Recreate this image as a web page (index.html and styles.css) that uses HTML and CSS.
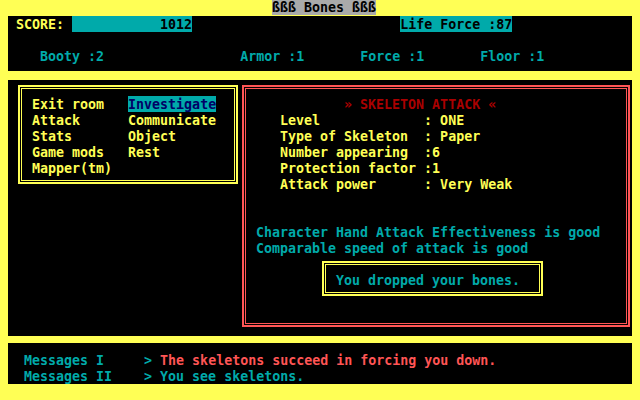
FILE: index.html
```html
<!DOCTYPE html>
<html>
<head>
<meta charset="utf-8">
<link rel="stylesheet" href="styles.css">
</head>
<body>
<div class="screen">
  <div class="titlebar"><span class="title">ßßß Bones ßßß</span></div>

  <div class="panel top">
    <div class="line yellow"> SCORE: <span class="bar">           1012</span>                          <span class="bar">Life Force :87</span></div>
    <div class="line"> </div>
    <div class="line cyan">    Booty :2                 Armor :1       Force :1       Floor :1</div>
  </div>

  <div class="panel middle">
    <div class="box menu">
      <div class="line">Exit room   <span class="sel">Investigate</span></div>
      <div class="line">Attack      Communicate</div>
      <div class="line">Stats       Object</div>
      <div class="line">Game mods   Rest</div>
      <div class="line">Mapper(tm)</div>
    </div>
    <div class="box attack">
      <div class="line darkred">           » SKELETON ATTACK «</div>
      <div class="line yellow">   Level             : ONE</div>
      <div class="line yellow">   Type of Skeleton  : Paper</div>
      <div class="line yellow">   Number appearing  :6</div>
      <div class="line yellow">   Protection factor :1</div>
      <div class="line yellow">   Attack power      : Very Weak</div>
      <div class="line"> </div>
      <div class="line"> </div>
      <div class="line cyan">Character Hand Attack Effectiveness is good</div>
      <div class="line cyan">Comparable speed of attack is good</div>
      <div class="box notice">
        <div class="line cyan">You dropped your bones.</div>
      </div>
    </div>
  </div>

  <div class="panel messages">
    <div class="line cyan">Messages I     &gt; <span class="lightred">The skeletons succeed in forcing you down.</span></div>
    <div class="line cyan">Messages II    &gt; You see skeletons.</div>
  </div>
</div>
</body>
</html>
```

FILE: styles.css
```css
html, body {
  margin: 0;
  padding: 0;
  background: #ffff55;
}

.screen {
  width: 640px;
  height: 400px;
  background: #ffff55;
  font-family: "DejaVu Sans Mono", "Liberation Mono", monospace;
  font-size: 13.3px;
  font-weight: bold;
  overflow: hidden;
}

.line {
  height: 16px;
  line-height: 17px;
  white-space: pre;
}

.titlebar {
  height: 16px;
  line-height: 16px;
  padding-left: 272px;
  white-space: pre;
}

.title {
  display: inline-block;
  width: 104px;
  height: 15px;
  line-height: 15px;
  background: #aaaaaa;
  color: #000000;
  vertical-align: top;
}

.panel {
  margin: 0 8px;
  background: #000000;
  box-sizing: border-box;
}

.top {
  height: 55px;
}

.bar {
  display: inline-block;
  height: 16px;
  vertical-align: top;
  background: #00aaaa;
  color: #000000;
}

.yellow { color: #ffff55; }
.cyan { color: #00aaaa; }
.darkred { color: #aa0000; }
.lightred { color: #ff5555; }

.middle {
  margin-top: 9px;
  height: 256px;
  display: flex;
  align-items: flex-start;
  padding: 5px 0 0 10px;
}

.box {
  box-sizing: border-box;
  border: 2px solid #ffff55;
  box-shadow: inset 0 0 0 1px #000000, inset 0 0 0 2px #ffff55;
}

.menu {
  width: 220px;
  height: 99px;
  padding: 9px 0 0 12px;
  color: #ffff55;
}

.sel {
  display: inline-block;
  height: 16px;
  vertical-align: top;
  background: #00aaaa;
  color: #000066;
}

.attack {
  margin-left: 4px;
  width: 388px;
  height: 242px;
  padding: 9px 0 0 12px;
  border-color: #ff5555;
  box-shadow: inset 0 0 0 1px #000000, inset 0 0 0 2px #ff5555;
}

.notice {
  margin: 5px 0 0 66px;
  width: 221px;
  height: 35px;
  padding: 9px 0 0 12px;
}

.messages {
  margin-top: 7px;
  height: 41px;
  padding: 9px 0 0 16px;
}
```
